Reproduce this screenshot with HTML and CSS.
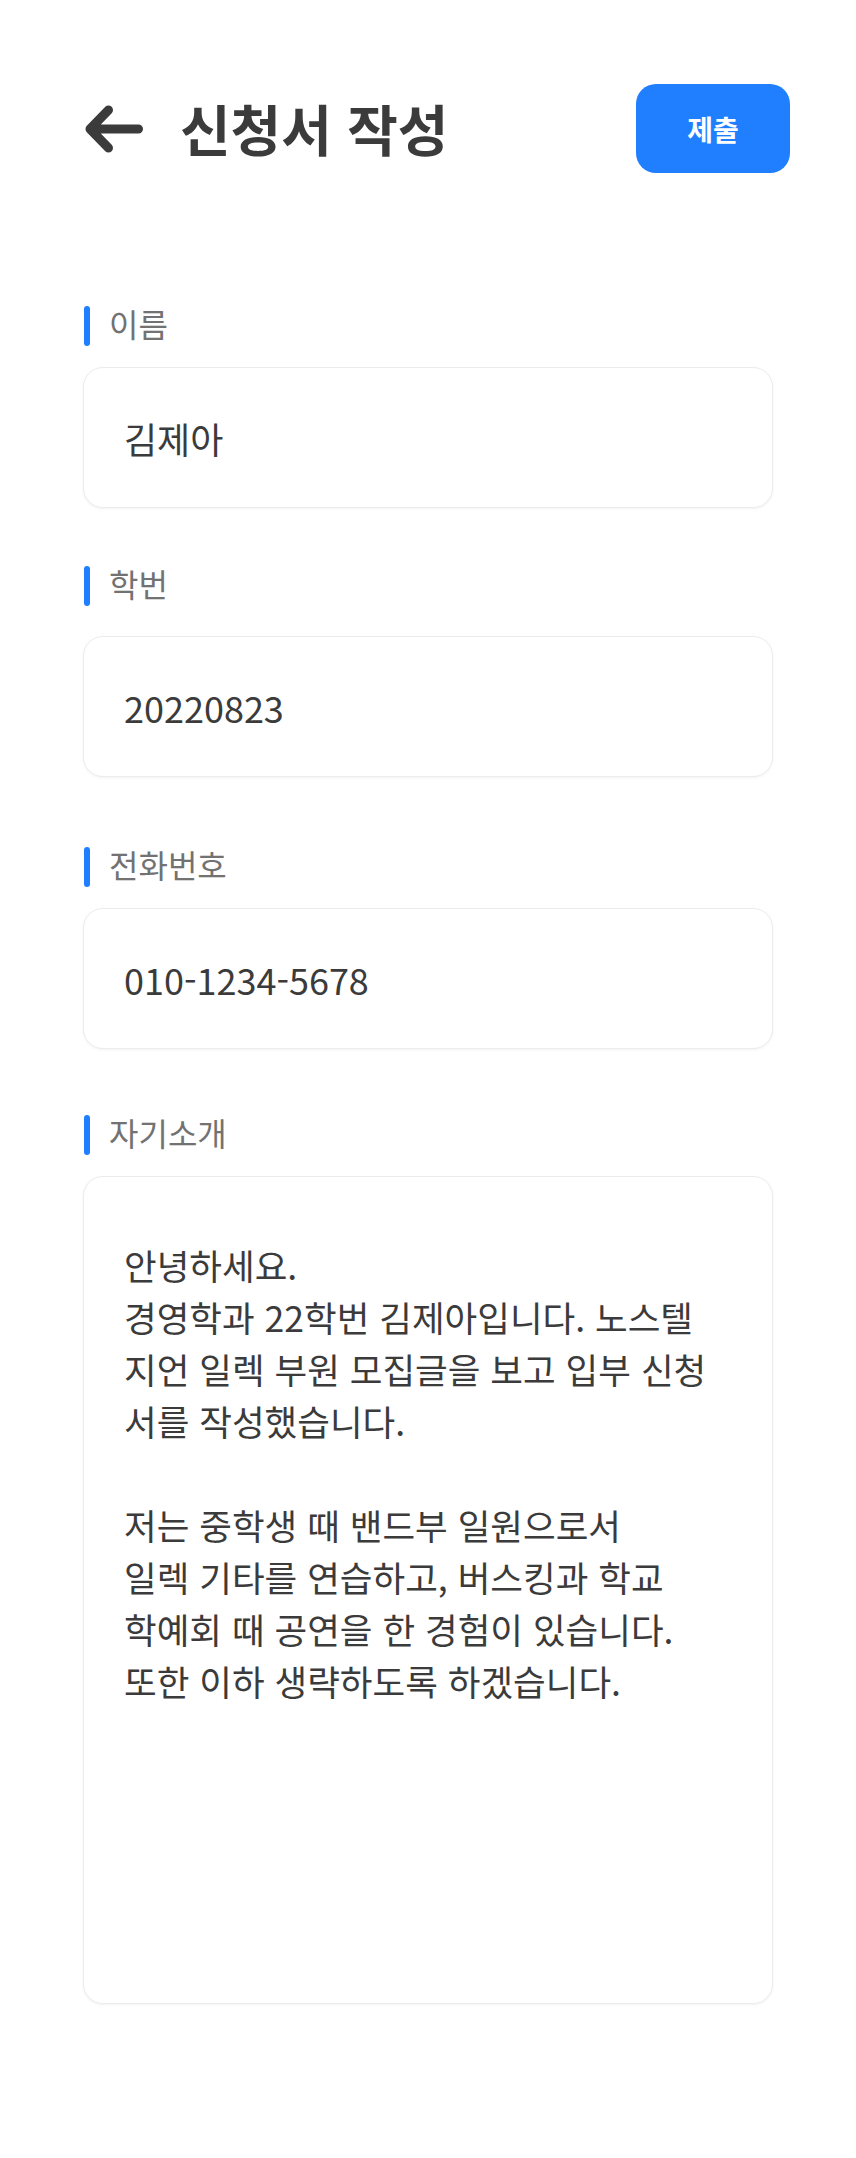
FILE: index.html
```html
<!DOCTYPE html>
<html lang="ko">
<head>
<meta charset="utf-8">
<title>신청서 작성</title>
<link rel="stylesheet" href="styles.css">
</head>
<body>
<div class="page">
  <header class="header">
    <div class="header-left">
      <svg class="back" viewBox="0 0 58 48" width="58" height="48" aria-hidden="true">
        <path d="M53.5 24 H5.5 M23.5 5 L5 24 L23.5 43" fill="none" stroke="#3b3b3b" stroke-width="9" stroke-linecap="round" stroke-linejoin="round"/>
      </svg>
      <h1 class="title">신청서 작성</h1>
    </div>
    <button class="submit">제출</button>
  </header>

  <main class="form">
    <section class="field field-first">
      <div class="label"><span class="bar"></span><span class="label-text">이름</span></div>
      <div class="box">김제아</div>
    </section>
    <section class="field field-wide">
      <div class="label"><span class="bar"></span><span class="label-text">학번</span></div>
      <div class="box">20220823</div>
    </section>
    <section class="field field-third">
      <div class="label"><span class="bar"></span><span class="label-text">전화번호</span></div>
      <div class="box">010-1234-5678</div>
    </section>
    <section class="field field-fourth">
      <div class="label"><span class="bar"></span><span class="label-text">자기소개</span></div>
      <div class="box box-area">안녕하세요.<br>경영학과 22학번 김제아입니다. 노스텔<br>지언 일렉 부원 모집글을 보고 입부 신청<br>서를 작성했습니다.<br><br>저는 중학생 때 밴드부 일원으로서<br>일렉 기타를 연습하고, 버스킹과 학교<br>학예회 때 공연을 한 경험이 있습니다.<br>또한 이하 생략하도록 하겠습니다.</div>
    </section>
  </main>
</div>
</body>
</html>
```

FILE: styles.css
```css
* {
  box-sizing: border-box;
}

body {
  margin: 0;
  background: #ffffff;
  font-family: "Noto Sans CJK KR", "Noto Sans", sans-serif;
  color: #3b3b3b;
}

.page {
  width: 856px;
  min-height: 2158px;
}

.header {
  display: flex;
  align-items: center;
  justify-content: space-between;
  padding: 84px 66px 0 85px;
}

.header-left {
  display: flex;
  align-items: center;
  gap: 37px;
}

.back {
  display: block;
  flex: none;
}

.title {
  margin: 0 0 2px;
  font-size: 55px;
  font-weight: 700;
  line-height: 1;
  color: #3b3b3b;
}

.submit {
  width: 154px;
  height: 89px;
  border: none;
  border-radius: 20px;
  background: #1f7fff;
  color: #ffffff;
  font-family: "Noto Sans CJK KR", "Noto Sans", sans-serif;
  font-size: 28px;
  font-weight: 700;
  padding: 0;
}

.form {
  padding: 0 83px;
}

.field-first {
  margin-top: 133px;
}

.field-wide {
  margin-top: 58px;
}

.field-third {
  margin-top: 70px;
}

.field-fourth {
  margin-top: 66px;
}

.label {
  display: flex;
  align-items: center;
  height: 40px;
  gap: 19px;
}

.bar {
  width: 6px;
  height: 40px;
  border-radius: 3px;
  background: #1f7fff;
  margin-left: 1px;
}

.label-text {
  font-size: 32px;
  color: #727272;
  line-height: 1;
  margin-bottom: 7px;
}

.box {
  margin-top: 21px;
  height: 141px;
  border: 1px solid #ececec;
  border-radius: 20px;
  background: #ffffff;
  box-shadow: 0 1px 3px rgba(0, 0, 0, 0.05);
  display: flex;
  align-items: center;
  padding: 0 40px;
  font-size: 36px;
  color: #3b3b3b;
}

.field-wide .box {
  margin-top: 30px;
}

.box-area {
  display: block;
  height: 828px;
  padding: 62px 40px 0 40px;
  font-size: 35.5px;
  line-height: 52px;
}
```
